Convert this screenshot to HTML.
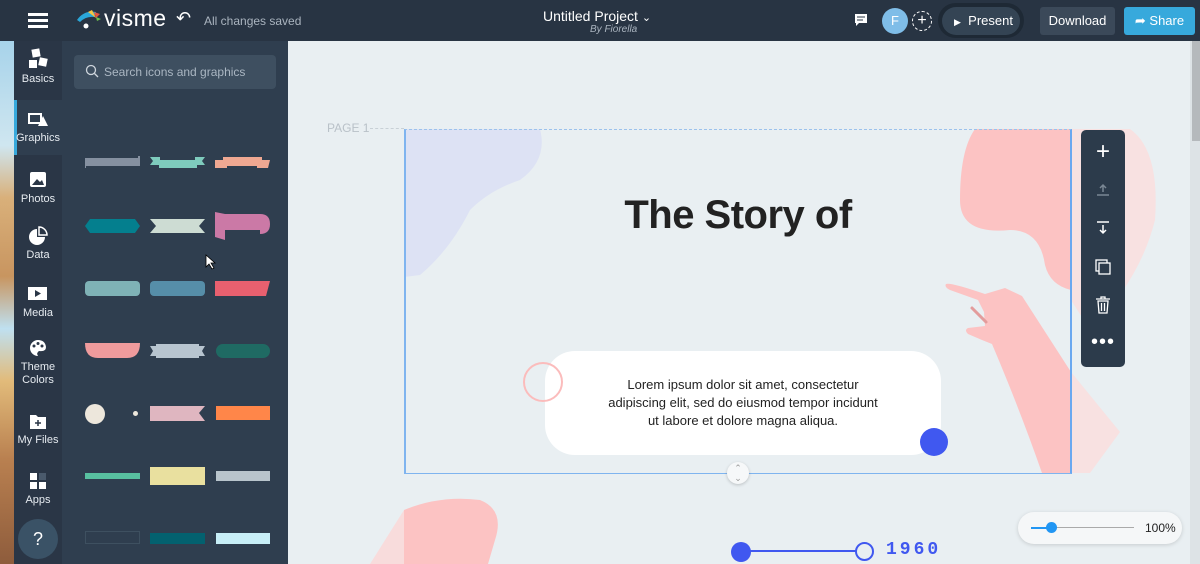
<!DOCTYPE html>
<html><head><meta charset="utf-8"><style>
*{margin:0;padding:0;box-sizing:border-box}
body{width:1200px;height:564px;overflow:hidden;font-family:"Liberation Sans",sans-serif;background:#e9eff2;position:relative}
.abs{position:absolute}
#top{left:0;top:0;width:1200px;height:41px;background:#283443}
#rail{left:14px;top:41px;width:48px;height:523px;background:#2a3646}
#strip{left:0;top:41px;width:14px;height:523px;background:linear-gradient(#a7d3ea 0%,#cfe6f0 20%,#d9b07a 30%,#c89560 45%,#bfe0f0 55%,#e2bb7a 65%,#b98050 80%,#8e5c3c 100%)}
#panel{left:62px;top:41px;width:226px;height:523px;background:#2f3e4f}
.ri{position:absolute;left:14px;width:48px;text-align:center;color:#e6ebf0;font-size:11px;line-height:13px;font-family:"Liberation Sans Narrow","Liberation Sans",sans-serif}
.ri svg{display:block;margin:0 auto 3px}
.g{position:absolute}
</style></head><body>
<div id="top" class="abs"></div>
<div class="abs" style="left:28px;top:13px;width:20px;height:3px;background:#fff;box-shadow:0 6px 0 #fff,0 12px 0 #fff"></div>
<svg class="abs" style="left:76px;top:8px" width="26" height="22"><path d="M1 12 Q8 2 20 4 L18 9 Q10 8 4 14Z" fill="#2aa6d8"/><path d="M12 4 L16 2 L20 10Z" fill="#f4c542"/><path d="M18 4 L24 6 L20 10Z" fill="#e5533d"/><path d="M20 9 L25 11 L21 13Z" fill="#6cc04a"/><circle cx="10" cy="18" r="2.5" fill="#fff"/></svg>
<div class="abs" style="left:104px;top:5px;color:#fff;font-size:23px;letter-spacing:0.5px">visme</div>
<div class="abs" style="left:176px;top:8px;color:#fff;font-size:18px">↶</div>
<div class="abs" style="left:204px;top:14px;color:#aab4bf;font-size:12px">All changes saved</div>
<div class="abs" style="left:543px;top:8px;color:#fff;font-size:14px">Untitled Project <span style="font-size:11px">⌄</span></div>
<div class="abs" style="left:590px;top:24px;color:#aab4bf;font-size:10px;font-style:italic">By Fiorella</div>
<svg class="abs" style="left:854px;top:13px" width="14" height="14"><path d="M1 1h12v9H5l-3 3V10H1z" fill="#fff"/><path d="M3 4h8M3 7h6" stroke="#283443"/></svg>
<div class="abs" style="left:882px;top:8px;width:26px;height:26px;border-radius:50%;background:#7fbde8;color:#fff;font-size:13px;text-align:center;line-height:26px">F</div>
<div class="abs" style="left:912px;top:11px;width:20px;height:20px;border-radius:50%;border:1px dashed #fff;color:#fff;text-align:center;line-height:18px;font-size:16px">+</div>
<div class="abs" style="left:938px;top:3px;width:86px;height:35px;border-radius:18px;background:#1e2935"></div>
<div class="abs" style="left:942px;top:7px;width:78px;height:28px;border-radius:14px;background:#344454;color:#fff;font-size:13px;line-height:28px;padding-left:12px"><span style="font-size:9px">▶</span>&nbsp; Present</div>
<div class="abs" style="left:1040px;top:7px;width:75px;height:28px;border-radius:3px;background:#3b4959;color:#fff;font-size:13px;line-height:28px;text-align:center">Download</div>
<div class="abs" style="left:1124px;top:7px;width:71px;height:28px;border-radius:3px;background:#37a9dc;color:#fff;font-size:13px;line-height:28px;text-align:center">➦ Share</div>

<div id="strip" class="abs"></div>
<div id="rail" class="abs"></div>
<div class="abs" style="left:14px;top:100px;width:48px;height:55px;background:#2f3e4f;border-left:3px solid #37a9dc"></div>
<div id="panel" class="abs"></div>

<div class="ri" style="top:48px"><svg width="22" height="22"><rect x="5" y="1" width="8" height="8" fill="#fff" transform="rotate(-10 9 5)"/><rect x="2" y="12" width="8" height="8" fill="#fff"/><rect x="12" y="10" width="8" height="8" fill="#fff" transform="rotate(12 16 14)"/></svg>Basics</div>
<div class="ri" style="top:111px"><svg width="22" height="18"><rect x="2" y="3" width="12" height="9" fill="none" stroke="#fff" stroke-width="2"/><path d="M11 15 L16 5 L21 15Z" fill="#fff"/></svg>Graphics</div>
<div class="ri" style="top:170px"><svg width="20" height="20"><rect x="2" y="2" width="16" height="15" rx="2" fill="#fff"/><path d="M4 15 L9 9 L12 12 L14 10 L16 15Z" fill="#2a3646"/></svg>Photos</div>
<div class="ri" style="top:226px"><svg width="20" height="20"><path d="M9 3 A8 8 0 1 0 17 11 L9 11Z" fill="#fff"/><path d="M11 1 L11 9 L19 9 A8 8 0 0 0 11 1Z" fill="none" stroke="#fff" stroke-width="1.5"/></svg>Data</div>
<div class="ri" style="top:284px"><svg width="22" height="20"><rect x="1" y="3" width="19" height="13" fill="#fff"/><path d="M8 6 L14 9.5 L8 13Z" fill="#2a3646"/></svg>Media</div>
<div class="ri" style="top:338px"><svg width="20" height="20"><path d="M10 2 A8 8 0 1 0 10 18 Q8 15 11 13 Q18 14 18 9 Q17 2 10 2Z" fill="#fff"/><circle cx="6" cy="8" r="1.5" fill="#2a3646"/><circle cx="10" cy="5.5" r="1.5" fill="#2a3646"/><circle cx="14" cy="8" r="1.5" fill="#2a3646"/></svg>Theme<br>Colors</div>
<div class="ri" style="top:411px"><svg width="20" height="20"><path d="M2 4h6l2 2h8v12H2z" fill="#fff"/><path d="M10 9v6M7 12h6" stroke="#2a3646" stroke-width="1.5"/></svg>My Files</div>
<div class="ri" style="top:471px"><svg width="20" height="20"><rect x="2" y="2" width="7" height="7" fill="#fff"/><rect x="11" y="2" width="7" height="7" fill="#4a5a6c"/><rect x="2" y="11" width="7" height="7" fill="#fff"/><rect x="11" y="11" width="7" height="7" fill="#fff"/></svg>Apps</div>
<div class="abs" style="left:18px;top:519px;width:40px;height:40px;border-radius:50%;background:#3a5266;color:#fff;font-size:18px;text-align:center;line-height:40px">?</div>

<div class="abs" style="left:74px;top:55px;width:202px;height:34px;border-radius:4px;background:#3e4f60;color:#aab6c2;font-size:12px;line-height:34px;padding-left:30px">Search icons and graphics</div>
<svg class="abs" style="left:85px;top:64px" width="14" height="14"><circle cx="6" cy="6" r="4.5" fill="none" stroke="#cfd6dd" stroke-width="1.3"/><path d="M9.5 9.5 L13 13" stroke="#cfd6dd" stroke-width="1.3"/></svg>

<svg class="g" style="left:85px;top:156px" width="55" height="12"><path d="M0 2 H55 V10 H0Z" fill="#8590a0"/><path d="M0 2 V12 M54 0 V10" stroke="#8590a0" stroke-width="2"/></svg>
<svg class="g" style="left:150px;top:156px" width="55" height="13"><path d="M0 1 H10 V4 H45 V1 H55 L52 5 L55 9 H47 V12 H9 V9 H0 L3 5Z" fill="#7ecbbd"/></svg>
<svg class="g" style="left:215px;top:156px" width="55" height="13"><path d="M0 4 H8 V1 H47 V4 H55 L53 12 H42 V10 H12 V12 H0Z" fill="#efa892"/></svg>
<svg class="g" style="left:85px;top:218px" width="55" height="16"><path d="M0 8 L5 1 H50 L55 8 L50 15 H5Z" fill="#047f8e"/></svg>
<svg class="g" style="left:150px;top:218px" width="55" height="16"><path d="M0 1 H55 L49 8 L55 15 H0 L6 8Z" fill="#cddcd3"/></svg>
<svg class="g" style="left:215px;top:212px" width="55" height="30"><path d="M0 0 L10 2 H45 Q55 2 55 12 Q55 22 45 22 V18 H10 V28 L0 25Z" fill="#cb79a6"/></svg>
<div class="g" style="left:85px;top:281px;width:55px;height:15px;border-radius:4px;background:#7fb2b6"></div>
<div class="g" style="left:150px;top:281px;width:55px;height:15px;border-radius:4px;background:#568ea9"></div>
<svg class="g" style="left:215px;top:281px" width="55" height="15"><path d="M0 0 H55 L51 15 H0Z" fill="#e8606f"/></svg>
<svg class="g" style="left:85px;top:343px" width="55" height="16"><path d="M0 0 H55 Q55 15 42 15 H13 Q0 15 0 0Z" fill="#ef9b9d"/></svg>
<svg class="g" style="left:150px;top:343px" width="55" height="16"><path d="M0 3 H6 V1 H49 V3 H55 L52 8 L55 13 H49 V15 H6 V13 H0 L3 8Z" fill="#b7c4cf"/></svg>
<div class="g" style="left:216px;top:344px;width:54px;height:14px;border-radius:7px;background:#1f6a63"></div>
<div class="g" style="left:85px;top:404px;width:20px;height:20px;border-radius:50%;background:#ede7dc"></div>
<div class="g" style="left:133px;top:411px;width:5px;height:5px;border-radius:50%;background:#ede7dc"></div>
<svg class="g" style="left:150px;top:406px" width="55" height="15"><path d="M0 0 H55 L49 7 L55 15 H0Z" fill="#dfb6c0"/></svg>
<div class="g" style="left:216px;top:406px;width:54px;height:14px;background:#ff8649"></div>
<div class="g" style="left:85px;top:473px;width:55px;height:6px;background:#58c0a0"></div>
<div class="g" style="left:150px;top:467px;width:55px;height:18px;background:#e9e09f"></div>
<div class="g" style="left:216px;top:471px;width:54px;height:10px;background:#b8c4cc"></div>
<div class="g" style="left:85px;top:531px;width:55px;height:13px;border:1px solid #3e5060"></div>
<div class="g" style="left:150px;top:533px;width:55px;height:11px;background:#03616f"></div>
<div class="g" style="left:216px;top:533px;width:54px;height:11px;background:#c7eef7"></div>
<svg class="abs" style="left:205px;top:254px" width="12" height="16"><path d="M1 1 V13 L4 10 L7 15 L9 14 L6 9 H10Z" fill="#fff" stroke="#000" stroke-width="0.8"/></svg>

<div class="abs" style="left:1190px;top:41px;width:10px;height:523px;background:#dde3e6"></div>
<div class="abs" style="left:1192px;top:41px;width:8px;height:100px;background:#b5b9bc"></div>
<div class="abs" style="left:327px;top:121px;color:#b9c1c8;font-size:12px">PAGE 1</div>
<div class="abs" style="left:370px;top:128px;width:34px;border-top:1px dashed #c8d0d6"></div>
<svg class="abs" style="left:0;top:0" width="1200" height="564">
<defs><clipPath id="sl"><rect x="404" y="129" width="667" height="344"/></clipPath></defs>
<path d="M1071 129 L1130 129 Q1160 150 1155 220 Q1140 280 1090 330 L1071 300Z" fill="#f8e1e1"/>
<g clip-path="url(#sl)">
<path d="M404 129 H540 Q548 160 520 180 Q490 190 470 210 Q450 250 420 275 L404 277Z" fill="#dde2f4"/>
<path d="M975 129 H1071 V290 Q1050 285 1045 265 Q1040 230 1010 230 Q960 235 960 200 Q960 150 975 129Z" fill="#fcc3c3"/>
<path d="M946 284 Q950 282 985 294 L1005 288 L1022 296 L1071 372 L1071 473 L1042 473 Q1020 410 992 344 L982 340 L968 334 Q964 330 968 328 L985 326 L984 312 L978 300 L950 290 Q944 287 946 284Z" fill="#fcc3c3"/>
<path d="M972 308 L986 322" stroke="#e39c9c" stroke-width="3" stroke-linecap="round"/>
</g>
<path d="M1071 372 L1120 432 L1090 473 L1071 473Z" fill="#f8e1e1"/>
<path d="M404 564 L404 510 Q440 495 480 500 Q505 510 495 540 L488 564Z" fill="#fcc3c3"/>
<path d="M404 510 L370 564 H404Z" fill="#f8dcdc"/>
</svg>
<div class="abs" style="left:404px;top:129px;width:668px;height:345px;border:1px solid #7fb4ef;border-left:2px solid #7fb4ef;border-right:2px solid #6aa8f0;border-top:1px dashed #9cc2ec"></div>
<div class="abs" style="left:404px;top:193px;width:668px;text-align:center;font-size:40px;font-weight:bold;color:#222;letter-spacing:-0.5px">The Story of</div>
<div class="abs" style="left:545px;top:351px;width:396px;height:104px;border-radius:30px;background:#fff"></div>
<div class="abs" style="left:523px;top:362px;width:40px;height:40px;border-radius:50%;border:2px solid #fbbcbc"></div>
<div class="abs" style="left:545px;top:376px;width:396px;text-align:center;font-size:13px;line-height:18px;color:#222">Lorem ipsum dolor sit amet, consectetur<br>adipiscing elit, sed do eiusmod tempor incidunt<br>ut labore et dolore magna aliqua.</div>
<div class="abs" style="left:920px;top:428px;width:28px;height:28px;border-radius:50%;background:#4058f0"></div>
<div class="abs" style="left:727px;top:462px;width:22px;height:22px;border-radius:50%;background:#f6f8f9;box-shadow:0 1px 3px rgba(0,0,0,.2);color:#999;font-size:9px;text-align:center;line-height:10px;padding-top:1px">⌃<br>⌄</div>

<div class="abs" style="left:1081px;top:130px;width:44px;height:237px;border-radius:5px;background:#2c3b4b"></div>
<div class="abs" style="left:1081px;top:138px;width:44px;text-align:center;color:#fff;font-size:24px;line-height:28px">+</div>
<svg class="abs" style="left:1094px;top:183px" width="18" height="14"><path d="M9 2 V9 M6 5 L9 2 L12 5 M3 12 H15" stroke="#7a8794" stroke-width="1.5" fill="none"/></svg>
<svg class="abs" style="left:1094px;top:220px" width="18" height="16"><path d="M3 2 H15 M9 5 V13 M6 10 L9 13 L12 10" stroke="#fff" stroke-width="1.5" fill="none"/></svg>
<svg class="abs" style="left:1094px;top:258px" width="18" height="18"><rect x="2" y="2" width="11" height="11" fill="none" stroke="#fff" stroke-width="1.3"/><rect x="5" y="5" width="11" height="11" fill="#2c3b4b" stroke="#fff" stroke-width="1.3"/></svg>
<svg class="abs" style="left:1094px;top:295px" width="18" height="20"><path d="M2 4 H16 M7 4 V2 H11 V4 M4 6 L5 18 H13 L14 6Z M7.5 8 V16 M10.5 8 V16" stroke="#fff" stroke-width="1.3" fill="none"/></svg>
<div class="abs" style="left:1081px;top:331px;width:44px;text-align:center;color:#fff;font-size:20px;letter-spacing:1px">•••</div>

<div class="abs" style="left:1018px;top:512px;width:164px;height:32px;border-radius:16px;background:#f5f7f8;box-shadow:0 1px 4px rgba(0,0,0,.15)"></div>
<div class="abs" style="left:1031px;top:527px;width:20px;height:2px;background:#2196f3"></div>
<div class="abs" style="left:1051px;top:527px;width:83px;height:1px;background:#aaa"></div>
<div class="abs" style="left:1046px;top:522px;width:11px;height:11px;border-radius:50%;background:#2196f3"></div>
<div class="abs" style="left:1145px;top:521px;font-size:12px;color:#222">100%</div>

<div class="abs" style="left:731px;top:542px;width:20px;height:20px;border-radius:50%;background:#4058f0"></div>
<div class="abs" style="left:750px;top:550px;width:106px;height:2px;background:#4058f0"></div>
<div class="abs" style="left:855px;top:542px;width:19px;height:19px;border-radius:50%;border:2px solid #4058f0;background:#e9eff2"></div>
<div class="abs" style="left:886px;top:540px;font-size:18px;font-weight:bold;color:#4058f0;letter-spacing:3px;font-family:'Liberation Mono',monospace">1960</div>
</body></html>
